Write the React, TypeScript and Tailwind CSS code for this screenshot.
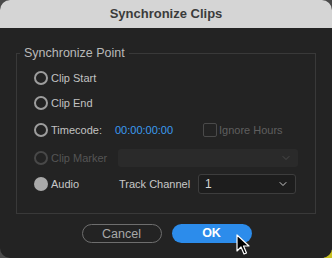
import { ChevronDown } from 'lucide-react';

function Radio({ checked = false, disabled = false }: { checked?: boolean; disabled?: boolean }) {
  if (checked) {
    return <span className="block h-[14px] w-[14px] shrink-0 rounded-full bg-[#a9a9a9]" />;
  }
  return (
    <span
      className={`block h-[14px] w-[14px] shrink-0 rounded-full border-2 ${
        disabled ? 'border-[#484848]' : 'border-[#9d9d9d]'
      }`}
    />
  );
}

function Row({ children, className = '' }: { children: React.ReactNode; className?: string }) {
  return <div className={`flex h-[24px] items-center ${className}`}>{children}</div>;
}

export default function App() {
  return (
    <div
      className="relative h-[258px] w-[332px] overflow-hidden bg-[#4a4a4a]"
      style={{ fontFamily: '"Liberation Sans", Arial, sans-serif' }}
    >
      {/* bit of desktop peeking through the corner */}
      <div className="absolute bottom-0 right-0 h-[8px] w-[8px] bg-[#c8c020]" />

      <div className="relative flex h-full w-full flex-col overflow-hidden rounded-[10px] bg-[#232323]">
        {/* Title bar */}
        <div className="flex h-[28px] shrink-0 items-center justify-center bg-[#d5d5d5]">
          <span className="text-[13px] font-bold text-[#3b3b3b]">Synchronize Clips</span>
        </div>

        <div className="px-[16px] pt-[16px]">
          <fieldset className="h-[170px] border border-[#393939] px-0">
            <legend className="ml-[3px] px-[4px] text-[12.5px] text-[#b9b9b9]">Synchronize Point</legend>

            <div className="flex flex-col pl-[17px] text-[11px] text-[#c2c2c2]">
              <Row className="mt-[3px]">
                <Radio />
                <span className="ml-[3px]">Clip Start</span>
              </Row>
              <Row className="mt-[1px]">
                <Radio />
                <span className="ml-[3px]">Clip End</span>
              </Row>
              <Row className="mt-[3px]">
                <Radio />
                <span className="ml-[3px] w-[64px]">Timecode:</span>
                <span className="w-[88px] text-[#3b9bf0]">00:00:00:00</span>
                <span className="block h-[14px] w-[14px] rounded-[2px] border border-[#4a4a4a]" />
                <span className="ml-[2px] text-[#5f5f5f]">Ignore Hours</span>
              </Row>
              <Row className="mt-[4px]">
                <Radio disabled />
                <span className="ml-[3px] w-[67px] text-[#555555]">Clip Marker</span>
                <div className="flex h-[18px] w-[180px] items-center justify-end rounded-[3px] bg-[#2a2a2a] pr-[6px]">
                  <ChevronDown size={12} strokeWidth={2} className="text-[#4a4a4a]" />
                </div>
              </Row>
              <Row className="mt-[2px]">
                <Radio checked />
                <span className="ml-[3px] w-[68px] text-[#c8c8c8]">Audio</span>
                <span className="w-[79px] text-[#c8c8c8]">Track Channel</span>
                <div className="flex h-[20px] w-[98px] items-center justify-between rounded-[3px] border border-[#3d3d3d] bg-[#1d1d1d] pl-[6px] pr-[6px]">
                  <span className="text-[12px] text-[#d6d6d6]">1</span>
                  <ChevronDown size={12} strokeWidth={2} className="text-[#c8c8c8]" />
                </div>
              </Row>
            </div>
          </fieldset>
        </div>

        {/* Buttons */}
        <div className="mt-[10px] flex justify-center gap-[10px] pl-[1px]">
          <button className="h-[19px] w-[80px] rounded-full border-[1.5px] border-[#6e6e6e] text-[12.5px] text-[#a8a8a8]">
            Cancel
          </button>
          <button className="h-[19px] w-[80px] rounded-full bg-[#2c8ceb] text-[12.5px] font-bold text-white">
            OK
          </button>
        </div>
      </div>

      {/* Mouse cursor */}
      <svg className="absolute left-[236px] top-[234px]" width="14" height="22" viewBox="0 0 14 22">
        <path
          d="M1 1 L1 17 L5 13 L8 20 L10.5 19 L7.5 12 L13 12 Z"
          fill="#000"
          stroke="#fff"
          strokeWidth="1.2"
          strokeLinejoin="round"
        />
      </svg>
    </div>
  );
}
